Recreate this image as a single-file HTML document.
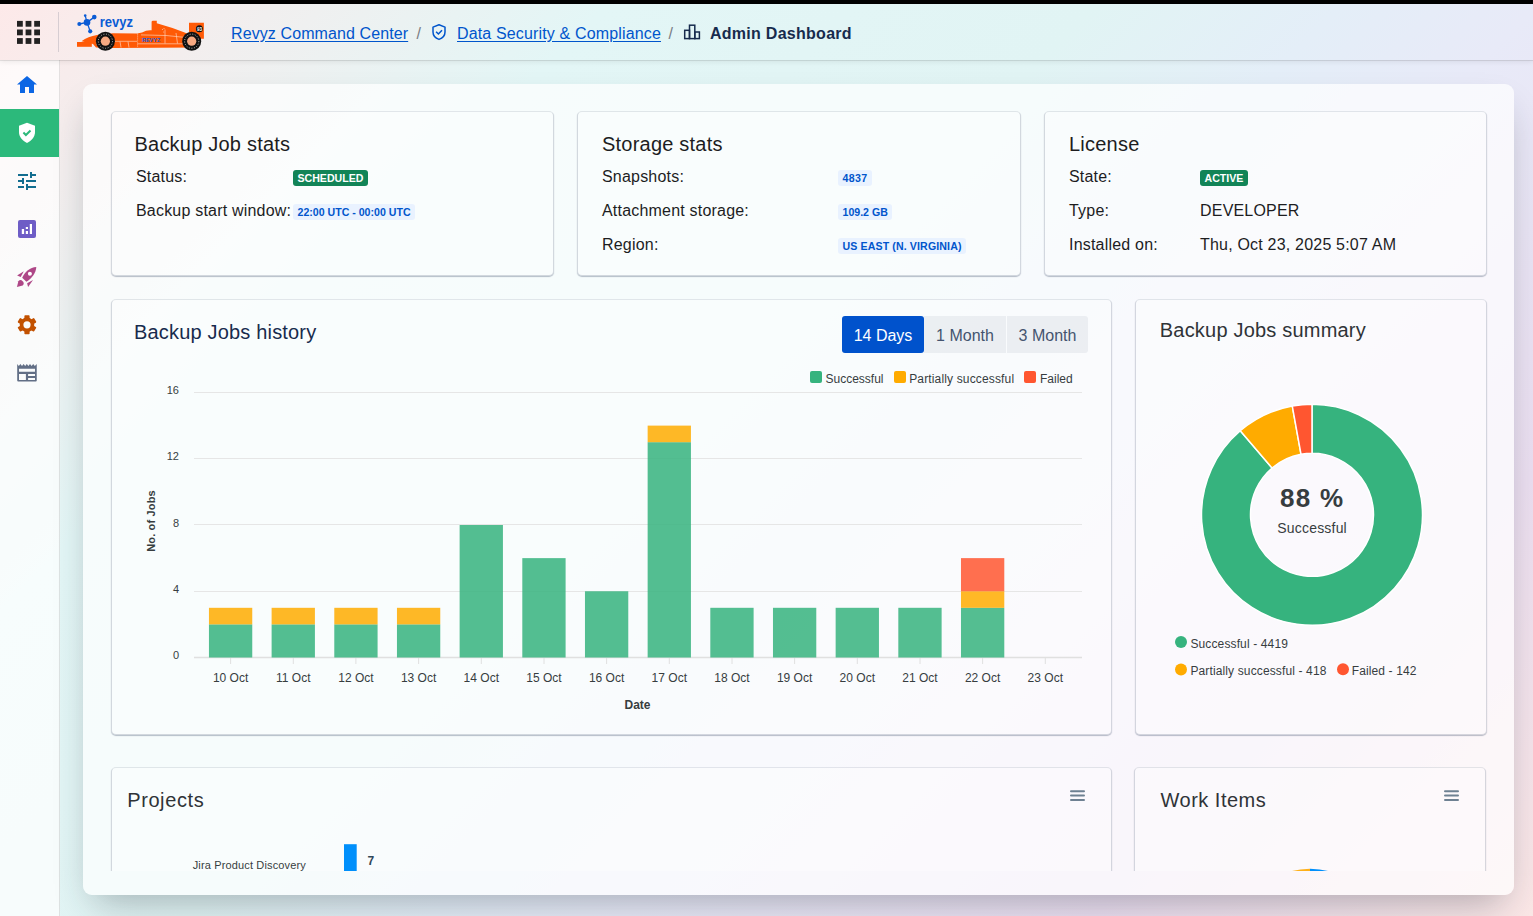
<!DOCTYPE html>
<html><head><meta charset="utf-8">
<style>
*{box-sizing:border-box;margin:0;padding:0}
html,body{width:1533px;height:916px;overflow:hidden}
body{font-family:"Liberation Sans",sans-serif;position:relative;
background:linear-gradient(135deg,#fde9e9 0%,#e3f6f6 25%,#e1f4f4 45%,#e4eef8 55%,#e8eaf8 63%,#ecdff1 82%,#fbe7e6 100%);}
.a{position:absolute;white-space:nowrap;line-height:1}
#topbar{left:0;top:0;width:1533px;height:4px;background:#000}
#header{left:0;top:4px;width:1533px;height:56px;background:transparent;box-shadow:0 1px 0 rgba(0,0,0,.09),0 2px 5px rgba(0,0,0,.07);z-index:2}
#side{left:0;top:60px;width:60px;height:856px;background:rgba(255,255,255,.72);border-right:1px solid rgba(0,0,0,.1)}
#main{left:83px;top:84px;width:1431px;height:811px;border-radius:9px;background:rgba(255,255,255,.7);box-shadow:0 18px 36px -11px rgba(30,40,50,.33)}
.card{position:absolute;border-radius:5px;border:1px solid rgba(9,30,66,.10);border-left-color:rgba(9,30,66,.16);border-right-color:rgba(9,30,66,.16);border-bottom-color:rgba(9,30,66,.16);box-shadow:0 1px 1px rgba(9,30,66,.28);background:rgba(255,255,255,.3)}
.t20{font-size:20px;color:#1d1d1f;letter-spacing:.22px}
.t16{font-size:16px;color:#1d1d1f;letter-spacing:.2px}
.loz{position:absolute;height:16px;border-radius:3px;font-size:10.6px;font-weight:bold;line-height:16px;padding:0 4.5px;white-space:nowrap}
.lg{background:#128457;color:#fff}
.lb{background:#e9f2ff;color:#0055cc}
.lnk{color:#0055cc;text-decoration:underline;text-underline-offset:2px}
</style></head><body>
<div id="topbar" class="a"></div>
<div id="header" class="a"></div>
<div id="side" class="a"></div>
<div id="main" class="a"></div>

<!-- stat cards -->
<div class="card" style="left:111px;top:111px;width:443px;height:165px"></div>
<div class="card" style="left:577px;top:111px;width:444px;height:165px"></div>
<div class="card" style="left:1044px;top:111px;width:443px;height:165px"></div>
<div class="card" style="left:111px;top:299px;width:1001px;height:436px"></div>
<div class="card" style="left:1135px;top:299px;width:352px;height:436px"></div>
<div style="position:absolute;left:100px;top:755px;width:1400px;height:116px;overflow:hidden">
  <div class="card" style="left:11px;top:12px;width:1001px;height:300px"></div>
  <div class="card" style="left:1034px;top:12px;width:352px;height:300px"></div>
</div>

<!-- stat card text -->
<div class="a t20" style="left:134.5px;top:134px">Backup Job stats</div>
<div class="a t16" style="left:136px;top:169px">Status:</div>
<div class="a t16" style="left:136px;top:203px">Backup start window:</div>
<div class="loz lg" style="left:293px;top:170px">SCHEDULED</div>
<div class="loz lb" style="left:293px;top:204px">22:00 UTC - 00:00 UTC</div>

<div class="a t20" style="left:602px;top:134px">Storage stats</div>
<div class="a t16" style="left:602px;top:169px">Snapshots:</div>
<div class="a t16" style="left:602px;top:203px">Attachment storage:</div>
<div class="a t16" style="left:602px;top:237px">Region:</div>
<div class="loz lb" style="left:838px;top:170px;letter-spacing:.35px">4837</div>
<div class="loz lb" style="left:838px;top:204px">109.2 GB</div>
<div class="loz lb" style="left:838px;top:238px;letter-spacing:.12px">US EAST (N. VIRGINIA)</div>

<div class="a t20" style="left:1069px;top:134px">License</div>
<div class="a t16" style="left:1069px;top:169px">State:</div>
<div class="a t16" style="left:1069px;top:203px">Type:</div>
<div class="a t16" style="left:1069px;top:237px">Installed on:</div>
<div class="loz lg" style="left:1200px;top:170px">ACTIVE</div>
<div class="a t16" style="left:1200px;top:203px">DEVELOPER</div>
<div class="a t16" style="left:1200px;top:237px">Thu, Oct 23, 2025 5:07 AM</div>


<svg class="a" style="left:0;top:0" width="1533" height="916" viewBox="0 0 1533 916" font-family="Liberation Sans, sans-serif">
<!-- header grid icon -->
<g fill="#222">
<rect x="17" y="20.9" width="5.8" height="5.8"/><rect x="25.6" y="20.9" width="5.8" height="5.8"/><rect x="34.2" y="20.9" width="5.8" height="5.8"/>
<rect x="17" y="29.5" width="5.8" height="5.8"/><rect x="25.6" y="29.5" width="5.8" height="5.8"/><rect x="34.2" y="29.5" width="5.8" height="5.8"/>
<rect x="17" y="38.1" width="5.8" height="5.8"/><rect x="25.6" y="38.1" width="5.8" height="5.8"/><rect x="34.2" y="38.1" width="5.8" height="5.8"/>
</g>
<rect x="58" y="12" width="1" height="40" fill="rgba(9,30,66,.14)"/>
<!-- logo -->
<g fill="#0b5cd5" stroke="#0b5cd5">
<g stroke-width="1.3"><line x1="87" y1="22.4" x2="85.2" y2="15.6"/><line x1="87" y1="22.4" x2="94.3" y2="17.1"/><line x1="87" y1="22.4" x2="79.3" y2="24"/><line x1="87" y1="22.4" x2="90.2" y2="31.3"/></g>
<g stroke="none"><circle cx="87" cy="22.4" r="3.3"/><circle cx="85.2" cy="15.6" r="1.3"/><circle cx="94.3" cy="17.1" r="2.3"/><circle cx="79.3" cy="24" r="2"/><circle cx="90.2" cy="31.3" r="2.1"/></g>
</g>
<text x="99.8" y="27" font-size="14" font-weight="bold" fill="#0b5cd5" textLength="33.3" lengthAdjust="spacingAndGlyphs">revyz</text>
<g fill="#ff5a06">
<rect x="77" y="42" width="14.8" height="4.8"/>
<path d="M81.5 41.2 Q88 36.5 97 35 L113 33.3 L137 33.4 L142 32.4 Q146 30.2 150 30.2 L151.6 30.2 L151.6 21.5 L152.6 20.8 L156.8 20.8 L156.8 23.3 Q172 27.5 186 33 L189 34.5 L189 22.8 L203.9 22.8 L203.9 38.8 L199 38.8 L199 47.5 L113 48 L96 47.5 L93 44 Z"/>
</g>
<g stroke="#fde3d3" stroke-width=".7" fill="none" opacity=".85"><path d="M137.6 33.5 L137.6 47.5" stroke-dasharray="1.2 .8"/><path d="M114 41.3 L137 41.3"/><path d="M137.5 43.8 L187 43.8"/><path d="M141 34.9 L166 35.5 L186 37.5"/><path d="M165 29.5 L165 43.5"/><path d="M176 33 L177.5 43.5"/><path d="M96 44.5 L113 44.8"/><path d="M120 41.5 L121 47.5"/><path d="M128 41.5 L129 47.5"/></g>
<g fill="#fff"><circle cx="162.5" cy="29.5" r=".45"/><circle cx="164" cy="28.5" r=".45"/><circle cx="163.8" cy="32" r=".45"/></g>
<text x="142" y="41.9" font-size="5.4" font-weight="bold" fill="#1a5cd6" textLength="18.3" lengthAdjust="spacingAndGlyphs">REVYZ</text>
<g><circle cx="105.4" cy="41.2" r="9.5" fill="#111"/><circle cx="105.4" cy="41.2" r="7.1" fill="none" stroke="#fff" stroke-width=".7" stroke-dasharray="1 1.6"/><circle cx="105.4" cy="41.2" r="4.6" fill="#f7a982"/>
<circle cx="191.7" cy="41.2" r="9.5" fill="#111"/><circle cx="191.7" cy="41.2" r="7.1" fill="none" stroke="#fff" stroke-width=".7" stroke-dasharray="1 1.6"/><circle cx="191.7" cy="41.2" r="4.6" fill="#f7a982"/>
<circle cx="199.4" cy="28.8" r="3.5" fill="#111"/><text x="199.4" y="30.6" font-size="4.5" font-weight="bold" fill="#fff" text-anchor="middle">93</text></g>
<!-- breadcrumb icons -->
<path d="M439 24.8 L445 27.1 L445 32 C445 35.4 442.6 38.2 439 39.4 C435.4 38.2 433 35.4 433 32 L433 27.1 Z" fill="none" stroke="#0055cc" stroke-width="1.5" stroke-linejoin="round"/>
<path d="M436.1 31.7 L438.4 34 L442 30.2" fill="none" stroke="#0055cc" stroke-width="1.5"/>
<g fill="none" stroke="#172b4d" stroke-width="1.5"><rect x="684.7" y="30.3" width="4.8" height="8.3"/><rect x="689.5" y="25.2" width="5.3" height="13.4"/><rect x="694.8" y="32" width="4.6" height="6.6"/></g>

<!-- sidebar -->
<rect x="0" y="109" width="59" height="48" fill="#2cb97b"/>
<path d="M27 76 L17 84.5 L20 84.5 L20 93 L25 93 L25 87 L29 87 L29 93 L34 93 L34 84.5 L37 84.5 Z" fill="#0c66e4"/>
<path d="M27 122.8 L35 125.8 L35 132 C35 136.8 31.6 140.9 27 142.9 C22.4 140.9 19 136.8 19 132 L19 125.8 Z" fill="#fff"/>
<path d="M23.4 132.5 L25.9 135 L30.5 130.5" fill="none" stroke="#2cb97b" stroke-width="2"/>
<g fill="#126d8f"><rect x="18" y="174" width="10" height="2"/><rect x="30" y="172" width="2" height="6"/><rect x="32" y="174" width="4" height="2"/>
<rect x="18" y="180" width="4" height="2"/><rect x="22" y="178" width="2" height="6"/><rect x="26" y="180" width="10" height="2"/>
<rect x="18" y="186" width="6" height="2"/><rect x="26" y="184" width="2" height="6"/><rect x="28" y="186" width="8" height="2"/></g>
<rect x="18" y="220" width="18" height="18" rx="2" fill="#6e5dc6"/>
<g fill="#fff"><rect x="21.8" y="229" width="2.3" height="5"/><rect x="25.8" y="227" width="2.2" height="2"/><rect x="25.8" y="231" width="2.2" height="3"/><rect x="29.8" y="224" width="2.2" height="10"/></g>
<g fill="#ae4787">
<path d="M22.2 277.7 C25 272 30 267.5 36.3 267.1 C36 273 31.6 279 26.4 281.7 Z"/>
<path d="M17.1 275.4 L23.8 271.2 L20.7 276.9 Z"/>
<path d="M28.1 286.9 L33 280 L27.1 283.3 Z"/>
<path d="M16.9 286.9 L18.4 281.2 A2.9 2.9 0 1 1 22.7 285.4 Z"/>
</g>
<circle cx="29.9" cy="273.8" r="2" fill="#fff"/>
<defs><mask id="gm"><rect x="0" y="300" width="60" height="60" fill="#fff"/><circle cx="27" cy="324.8" r="3.6" fill="#000"/></mask></defs>
<g fill="#c25100" mask="url(#gm)"><circle cx="27" cy="324.8" r="7.3"/>
<rect x="24.4" y="315.3" width="5.2" height="19" rx=".8"/><rect x="24.4" y="315.3" width="5.2" height="19" rx=".8" transform="rotate(60 27 324.8)"/><rect x="24.4" y="315.3" width="5.2" height="19" rx=".8" transform="rotate(120 27 324.8)"/></g>
<path fill="#626f86" fill-rule="evenodd" d="M17.2 364 L18.8 366 L20.4 364 L22 366 L23.6 364 L25.2 366 L26.8 364 L28.4 366 L30 364 L31.6 366 L33.2 364 L34.8 366 L36.75 364 L36.75 380.6 Q36.75 381.6 35.75 381.6 L18.2 381.6 Q17.2 381.6 17.2 380.6 Z M19 368.8 L35 368.8 L35 371.8 L19 371.8 Z M19 374.1 L25.9 374.1 L25.9 380 L19 380 Z M28.1 374.1 L35 374.1 L35 375.9 L28.1 375.9 Z M28.1 378 L35 378 L35 380 L28.1 380 Z"/>

<!-- history chart -->
<g stroke="#e6e6e6" stroke-width="1"><line x1="194" y1="392.5" x2="1082" y2="392.5"/><line x1="194" y1="458.5" x2="1082" y2="458.5"/><line x1="194" y1="524.5" x2="1082" y2="524.5"/><line x1="194" y1="591.5" x2="1082" y2="591.5"/></g>
<line x1="194" y1="657.5" x2="1082" y2="657.5" stroke="#e0e0e0" stroke-width="1.5"/>
<g font-size="11" fill="#373d3f" text-anchor="end"><text x="179" y="394">16</text><text x="179" y="460">12</text><text x="179" y="526.5">8</text><text x="179" y="593">4</text><text x="179" y="659">0</text></g>
<text transform="translate(155 521) rotate(-90)" font-size="11" font-weight="bold" fill="#373d3f" text-anchor="middle" letter-spacing=".15">No. of Jobs</text>
<text x="637.5" y="709" font-size="12" font-weight="bold" fill="#373d3f" text-anchor="middle">Date</text>
<rect x="208.95" y="624.38" width="43.3" height="33.12" fill="#36b37e" fill-opacity=".85"/>
<rect x="208.95" y="607.81" width="43.3" height="16.56" fill="#ffab00" fill-opacity=".85"/>
<rect x="271.62" y="624.38" width="43.3" height="33.12" fill="#36b37e" fill-opacity=".85"/>
<rect x="271.62" y="607.81" width="43.3" height="16.56" fill="#ffab00" fill-opacity=".85"/>
<rect x="334.29" y="624.38" width="43.3" height="33.12" fill="#36b37e" fill-opacity=".85"/>
<rect x="334.29" y="607.81" width="43.3" height="16.56" fill="#ffab00" fill-opacity=".85"/>
<rect x="396.96" y="624.38" width="43.3" height="33.12" fill="#36b37e" fill-opacity=".85"/>
<rect x="396.96" y="607.81" width="43.3" height="16.56" fill="#ffab00" fill-opacity=".85"/>
<rect x="459.63" y="525.00" width="43.3" height="132.50" fill="#36b37e" fill-opacity=".85"/>
<rect x="522.30" y="558.12" width="43.3" height="99.38" fill="#36b37e" fill-opacity=".85"/>
<rect x="584.97" y="591.25" width="43.3" height="66.25" fill="#36b37e" fill-opacity=".85"/>
<rect x="647.64" y="442.19" width="43.3" height="215.31" fill="#36b37e" fill-opacity=".85"/>
<rect x="647.64" y="425.62" width="43.3" height="16.56" fill="#ffab00" fill-opacity=".85"/>
<rect x="710.31" y="607.81" width="43.3" height="49.69" fill="#36b37e" fill-opacity=".85"/>
<rect x="772.98" y="607.81" width="43.3" height="49.69" fill="#36b37e" fill-opacity=".85"/>
<rect x="835.65" y="607.81" width="43.3" height="49.69" fill="#36b37e" fill-opacity=".85"/>
<rect x="898.32" y="607.81" width="43.3" height="49.69" fill="#36b37e" fill-opacity=".85"/>
<rect x="960.99" y="607.81" width="43.3" height="49.69" fill="#36b37e" fill-opacity=".85"/>
<rect x="960.99" y="591.25" width="43.3" height="16.56" fill="#ffab00" fill-opacity=".85"/>
<rect x="960.99" y="558.12" width="43.3" height="33.12" fill="#ff5630" fill-opacity=".85"/>
<g stroke="#e0e0e0" stroke-width="1"><line x1="230.6" y1="658" x2="230.6" y2="664"/><line x1="293.3" y1="658" x2="293.3" y2="664"/><line x1="355.9" y1="658" x2="355.9" y2="664"/><line x1="418.6" y1="658" x2="418.6" y2="664"/><line x1="481.3" y1="658" x2="481.3" y2="664"/><line x1="544.0" y1="658" x2="544.0" y2="664"/><line x1="606.6" y1="658" x2="606.6" y2="664"/><line x1="669.3" y1="658" x2="669.3" y2="664"/><line x1="732.0" y1="658" x2="732.0" y2="664"/><line x1="794.6" y1="658" x2="794.6" y2="664"/><line x1="857.3" y1="658" x2="857.3" y2="664"/><line x1="920.0" y1="658" x2="920.0" y2="664"/><line x1="982.6" y1="658" x2="982.6" y2="664"/><line x1="1045.3" y1="658" x2="1045.3" y2="664"/></g>
<g font-size="12" fill="#373d3f" text-anchor="middle"><text x="230.6" y="682">10 Oct</text><text x="293.3" y="682">11 Oct</text><text x="355.9" y="682">12 Oct</text><text x="418.6" y="682">13 Oct</text><text x="481.3" y="682">14 Oct</text><text x="544.0" y="682">15 Oct</text><text x="606.6" y="682">16 Oct</text><text x="669.3" y="682">17 Oct</text><text x="732.0" y="682">18 Oct</text><text x="794.6" y="682">19 Oct</text><text x="857.3" y="682">20 Oct</text><text x="920.0" y="682">21 Oct</text><text x="982.6" y="682">22 Oct</text><text x="1045.3" y="682">23 Oct</text></g>
<g><rect x="810" y="371" width="12" height="12" rx="2" fill="#36b37e"/><rect x="894" y="371" width="12" height="12" rx="2" fill="#ffab00"/><rect x="1024" y="371" width="12" height="12" rx="2" fill="#ff5630"/></g>
<g font-size="12" fill="#373d3f"><text x="825.5" y="383">Successful</text><text x="909.2" y="383" letter-spacing=".15">Partially successful</text><text x="1040" y="383">Failed</text></g>

<!-- donut -->
<g stroke="#fff" stroke-width="1.5" stroke-linejoin="round"><path d="M1312.00 404.30 A110.5 110.5 0 1 1 1240.25 430.76 L1272.07 468.03 A61.5 61.5 0 1 0 1312.00 453.30 Z" fill="#36b37e"/>
<path d="M1240.25 430.76 A110.5 110.5 0 0 1 1292.30 406.07 L1301.04 454.28 A61.5 61.5 0 0 0 1272.07 468.03 Z" fill="#ffab00"/>
<path d="M1292.30 406.07 A110.5 110.5 0 0 1 1312.00 404.30 L1312.00 453.30 A61.5 61.5 0 0 0 1301.04 454.28 Z" fill="#ff5630"/></g>
<text x="1312.2" y="507.4" font-size="26" font-weight="bold" fill="#373d3f" text-anchor="middle" letter-spacing="1.3">88 %</text>
<text x="1312.1" y="532.7" font-size="14" fill="#373d3f" text-anchor="middle" letter-spacing=".2">Successful</text>
<circle cx="1181" cy="642.1" r="6" fill="#36b37e"/><circle cx="1181" cy="669.4" r="6" fill="#ffab00"/><circle cx="1343" cy="669.2" r="6" fill="#ff5630"/>
<g font-size="12" fill="#373d3f" letter-spacing=".13"><text x="1190.4" y="647.8">Successful - 4419</text><text x="1190.4" y="675">Partially successful - 418</text><text x="1351.7" y="675">Failed - 142</text></g>

<!-- projects / work items -->
<g font-size="20" fill="#2f3337"><text x="127.2" y="806.8" letter-spacing=".6">Projects</text><text x="1160.5" y="806.8" letter-spacing=".5">Work Items</text><text x="1159.8" y="337" letter-spacing=".2">Backup Jobs summary</text></g>
<g fill="#6e8192"><rect x="1070" y="790.3" width="15" height="2" rx="1"/><rect x="1070" y="794.6" width="15" height="2" rx="1"/><rect x="1070" y="798.9" width="15" height="2" rx="1"/>
<rect x="1444" y="790.3" width="15" height="2" rx="1"/><rect x="1444" y="794.6" width="15" height="2" rx="1"/><rect x="1444" y="798.9" width="15" height="2" rx="1"/></g>
<clipPath id="cl871"><rect x="0" y="0" width="1533" height="871"/></clipPath><text clip-path="url(#cl871)" x="306" y="869.4" font-size="11" fill="#373d3f" text-anchor="end" letter-spacing=".15">Jira Product Discovery</text>
<rect x="344" y="844.2" width="12.7" height="26.8" fill="#008ffb"/>
<text x="367.4" y="864.5" font-size="12" font-weight="bold" fill="#304758">7</text>
<path d="M1292 871 Q1300 869 1310 868.8 L1310 871 Z" fill="#feb019"/><path d="M1310 868.8 Q1320 869 1328 871 L1310 871 Z" fill="#008ffb"/>
</svg>

<!-- header content -->
<div class="a lnk" style="left:231px;top:26px;font-size:16px;letter-spacing:.1px">Revyz Command Center</div>
<div class="a lnk" style="left:457px;top:26px;font-size:16px;letter-spacing:.15px">Data Security &amp; Compliance</div>
<div class="a" style="left:710px;top:26px;font-size:16px;font-weight:bold;color:#172b4d;letter-spacing:.27px">Admin Dashboard</div>


<div class="a" style="left:134px;top:322px;font-size:20px;color:#172b4d;letter-spacing:.18px">Backup Jobs history</div>
<div class="a" style="left:842px;top:316px;width:82px;height:37px;background:#0052cc;border-radius:3px;color:#fff;font-size:16px;line-height:40px;text-align:center">14 Days</div>
<div class="a" style="left:924px;top:316px;width:82px;height:37px;background:rgba(9,30,66,.06);color:#44546f;font-size:16px;line-height:40px;text-align:center">1 Month</div>
<div class="a" style="left:1007px;top:316px;width:81px;height:37px;background:rgba(9,30,66,.06);border-radius:0 3px 3px 0;color:#44546f;font-size:16px;line-height:40px;text-align:center">3 Month</div>
<div class="a" style="left:416.5px;top:26px;font-size:16px;color:#7a7d85">/</div>
<div class="a" style="left:668.5px;top:26px;font-size:16px;color:#7a7d85">/</div>
</body></html>
